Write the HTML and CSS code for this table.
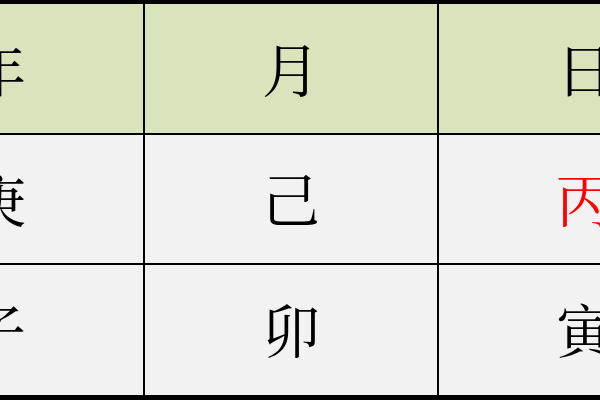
FILE: index.html
```html
<!DOCTYPE html>
<html lang="zh">
<head>
<meta charset="utf-8">
<link rel="stylesheet" href="styles.css">
</head>
<body>
<div class="table">
  <div class="cell head">年</div>
  <div class="cell head">月</div>
  <div class="cell head">日</div>
  <div class="cell">庚</div>
  <div class="cell">己</div>
  <div class="cell red">丙</div>
  <div class="cell">子</div>
  <div class="cell">卯</div>
  <div class="cell">寅</div>
</div>
</body>
</html>
```
FILE: styles.css
```css
html, body {
  margin: 0;
  padding: 0;
  width: 600px;
  height: 400px;
  overflow: hidden;
  background: #000;
}
.table {
  display: grid;
  grid-template-columns: 292px 292px 292px;
  grid-template-rows: 129px 128px 130px;
  gap: 2px;
  padding-top: 4px;
  padding-bottom: 5px;
  margin-left: -149px;
  width: 880px;
  background: #000;
}
.cell {
  background: #f2f2f2;
  display: flex;
  align-items: center;
  justify-content: center;
  padding-bottom: 4px;
  font-family: "Noto Serif CJK SC", "Noto Sans CJK SC", serif;
  font-size: 58px;
  line-height: 1;
  color: #000;
}
.head {
  background: #d9e3bc;
}
.red {
  color: #ff0000;
}
```
